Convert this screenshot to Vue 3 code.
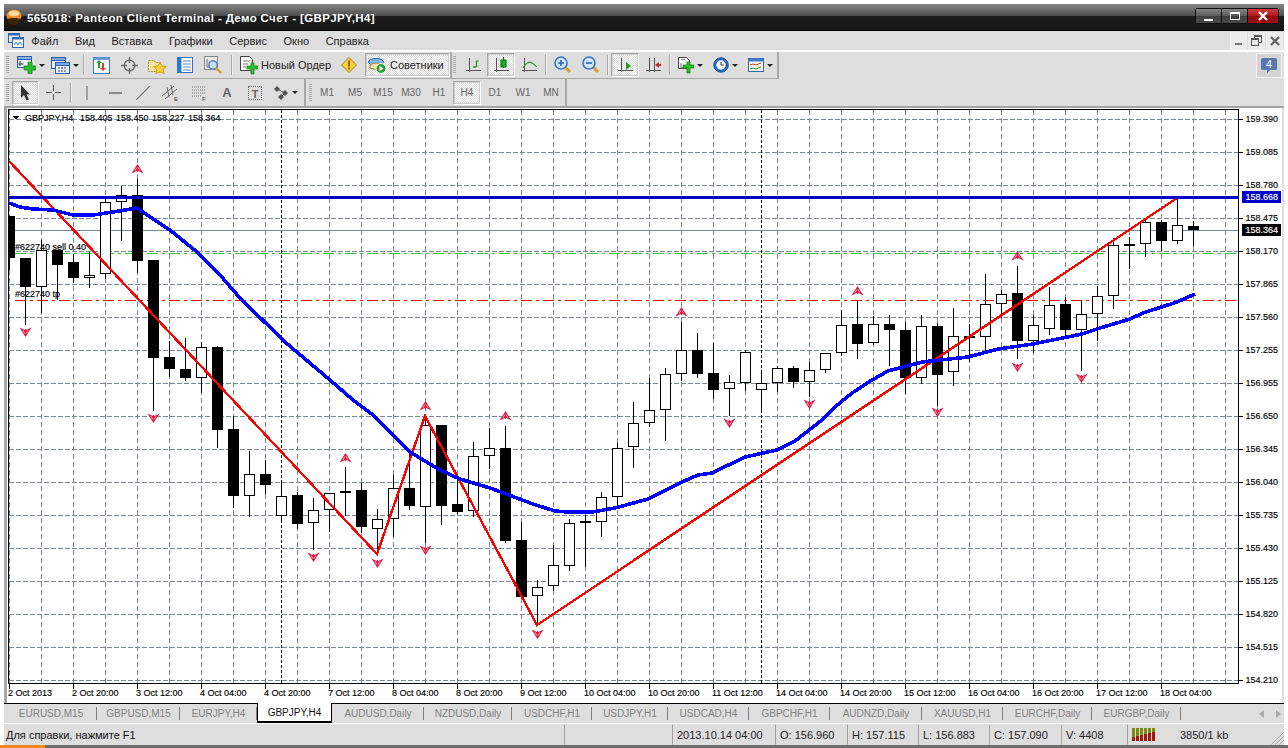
<script setup>
const labels = ['159.390','159.085','158.780','158.475','158.170','157.865','157.560','157.255','156.955','156.650','156.345','156.040','155.735','155.430','155.125','154.820','154.515','154.210']
const hGrid = labels.map((t, i) => ({ t, y: 119 + i * 33 }))
const vGrid = Array.from({ length: 39 }, (_, i) => 9 + i * 32)
const dates = ['2 Oct 2013','2 Oct 20:00','3 Oct 12:00','4 Oct 04:00','4 Oct 20:00','7 Oct 12:00','8 Oct 04:00','8 Oct 20:00','9 Oct 12:00','10 Oct 04:00','10 Oct 20:00','11 Oct 12:00','14 Oct 04:00','14 Oct 20:00','15 Oct 12:00','16 Oct 04:00','16 Oct 20:00','17 Oct 12:00','18 Oct 04:00']
const dateTicks = dates.map((t, i) => ({ t, x: 9 + i * 64 }))
const raw = [
['b',216,258,216,270],['b',258,287,258,325],['w',250,287,240,313],['b',250,265,250,300],['b',262,278,254,283],['w',275,278,252,288],['w',202,274,197,279],['w',195,202,186,241],['b',195,261,179,273],['b',260,358,260,411],
['b',357,369,341,377],['b',369,378,338,381],['w',347,378,342,393],['b',347,430,346,448],['b',429,496,416,508],['w',474,496,451,517],['b',474,485,460,494],['w',496,516,482,520],['b',495,524,492,529],['w',510,523,498,550],
['w',493,510,493,532],['w',491,493,467,516],['b',490,527,483,533],['w',519,529,509,553],['w',488,519,475,537],['b',488,506,450,510],['w',425,507,416,543],['b',425,506,425,525],['b',504,512,480,514],['w',456,511,442,517],
['w',448,456,428,469],['b',448,541,426,543],['b',540,597,522,597],['w',587,596,580,625],['w',565,586,545,591],['w',523,566,519,571],['w',521,523,515,567],['w',497,522,492,537],['w',448,497,443,508],['w',423,447,402,468],
['w',410,423,378,427],['w',374,410,368,441],['w',350,374,322,381],['b',350,374,333,378],['b',373,390,343,399],['w',382,389,375,416],['w',352,383,350,391],['w',383,390,372,413],['w',368,383,366,392],['b',368,382,366,388],
['w',370,382,362,397],['w',353,370,353,373],['w',325,353,310,356],['b',324,344,301,359],['w',324,343,316,345],['b',324,330,315,366],['b',330,378,322,394],['w',326,378,315,384],['b',326,375,323,406],['w',336,372,308,386],
['c',336,337,324,362],['w',304,337,274,351],['w',294,304,290,318],['b',293,341,266,359],['w',325,341,315,353],['w',305,329,287,335],['b',304,330,297,339],['w',314,330,300,371],['w',296,314,286,341],['w',245,296,238,309],
['c',244,245,237,269],['w',222,244,218,257],['b',222,241,220,251],['w',225,241,198,244],['b',226,230,221,246]
]
const candles = raw.map((c, i) => ({ x: 9 + i * 16, k: c[0], top: c[1], bot: c[2], hi: c[3], lo: c[4] }))
const ma = '9,203 20,207 33,209 53,210 73,215 93,215 113,212 137,208 147,215 170,230 197,252 220,275 240,298 285,342 330,380 353,400 373,415 410,452 440,470 460,479 490,488 533,504 555,511 568,512 592,512 615,508 648,499 682,482 698,475 712,473 745,457 777,450 795,441 822,420 835,407 852,393 872,380 888,371 922,362 968,357 998,349 1033,344 1082,334 1100,328 1130,319 1143,313 1177,302 1195,294'
const zig = '9,161 377,554 425,416 537,625 1177,198'
const ups = [[137,169],[345,458],[425,406],[505,416],[681,312],[857,291],[1017,256]]
const downs = [[25,332],[153,418],[313,557],[377,563],[425,550],[537,634],[729,423],[809,404],[937,412],[1017,367],[1081,378]]
const menu = ['Файл','Вид','Вставка','Графики','Сервис','Окно','Справка']
const frames = ['M1','M5','M15','M30','H1','H4','D1','W1','MN']
const tabNames = ['EURUSD,M15','GBPUSD,M15','EURJPY,H4','GBPJPY,H4','AUDUSD,Daily','NZDUSD,Daily','USDCHF,H1','USDJPY,H1','USDCAD,H4','GBPCHF,H1','AUDNZD,Daily','XAUUSD,H1','EURCHF,Daily','EURGBP,Daily']
const edges = [5,97,180,257,332,424,512,592,668,749,830,922,1003,1092,1181]
const tabs = tabNames.map((n, i) => ({ n, w: edges[i + 1] - edges[i], on: i === 3 }))
const cells = [
  { t: '', w: 108 },
  { t: '2013.10.14 04:00', w: 103 },
  { t: 'O: 156.960', w: 72 },
  { t: 'H: 157.115', w: 71 },
  { t: 'L: 156.883', w: 71 },
  { t: 'C: 157.090', w: 72 },
  { t: 'V: 4408', w: 66 }
]
const signal = Array.from({ length: 6 }, (_, i) => i)
</script>

<template>
  <div class="root">
    <div class="win">
      <header class="title">
        <svg class="logo" width="16" height="17" viewBox="0 0 16 17">
          <ellipse cx="8" cy="7" rx="7.5" ry="6.5" fill="#f08a20"/>
          <ellipse cx="8" cy="4.5" rx="5.5" ry="3" fill="#fcd9a0"/>
          <path d="M1 10 Q8 8 15 10 Q14 16 8 16 Q2 16 1 10Z" fill="#3a2208"/>
        </svg>
        <span class="title-text">565018: Panteon Client Terminal - Демо Счет - [GBPJPY,H4]</span>
        <div class="wbtns">
          <div class="wb"><i class="wb-min"></i></div>
          <div class="wb"><i class="wb-max"></i></div>
          <div class="wb wb-close">
            <svg width="12" height="10" viewBox="0 0 12 10"><path d="M2 1 L10 9 M10 1 L2 9" stroke="#fff" stroke-width="2.4"/></svg>
          </div>
        </div>
      </header>

      <nav class="menubar">
        <svg class="app-ic" width="16" height="15" viewBox="0 0 16 15">
          <rect x="0.5" y="0.5" width="11" height="9" fill="#dfe9f8" stroke="#3566b0"/>
          <rect x="0.5" y="0.5" width="11" height="2" fill="#3566b0"/>
          <rect x="4.5" y="4.5" width="11" height="10" fill="#fff" stroke="#3566b0"/>
          <rect x="4.5" y="4.5" width="11" height="2" fill="#3566b0"/>
          <path d="M6 12 L8 9 L10 12 L12 9 L14 12" stroke="#2a7ac0" fill="none"/>
        </svg>
        <span v-for="m in menu" :key="m" class="mi">{{ m }}</span>
        <div class="mdi">
          <div class="mb"><i class="mb-min"></i></div>
          <div class="mb"><svg width="11" height="11" viewBox="0 0 11 11" fill="none" stroke="#555"><rect x="3.5" y="0.5" width="7" height="7"/><path d="M3.5 1.5h7"/><rect x="0.5" y="3.5" width="7" height="7" fill="#e8e8e8"/><path d="M0.5 4.5h7"/></svg></div>
          <div class="mb"><svg width="10" height="10" viewBox="0 0 10 10"><path d="M1 1 L9 9 M9 1 L1 9" stroke="#666" stroke-width="2.4"/></svg></div>
        </div>
      </nav>

      <div class="row row1">
        <div class="bar bar1">
          <span class="grip"></span>
          <div class="b w31">
            <svg width="19" height="18" viewBox="0 0 19 18"><rect x=".5" y=".5" width="14" height="11" fill="#eef4fc" stroke="#2a5fa8"/><rect x=".5" y=".5" width="14" height="3" fill="#8ab0e4" stroke="#2a5fa8"/><path d="M3 5v5M1.500 8h5" stroke="#333"/><path d="M7 10h4V6h4v4h4v4h-4v4h-4v-4H7z" fill="#2cc02c" stroke="#0c7a0c" stroke-width=".7"/></svg>
            <i class="dd"></i>
          </div>
          <div class="b w32">
            <svg width="19" height="17" viewBox="0 0 19 17"><rect x=".5" y=".5" width="14" height="11" fill="#e6eefa" stroke="#2a5fa8"/><rect x=".5" y=".5" width="14" height="3" fill="#7fa8e0" stroke="#2a5fa8"/><rect x="4.5" y="5.5" width="14" height="11" fill="#e6eefa" stroke="#2a5fa8"/><rect x="4.5" y="5.5" width="14" height="3" fill="#7fa8e0" stroke="#2a5fa8"/><path d="M7 11h9M7 14h9" stroke="#444" stroke-dasharray="2 1"/></svg>
            <i class="dd"></i>
          </div>
          <i class="sep sep-first"></i>
          <div class="b">
            <svg width="17" height="17" viewBox="0 0 17 17"><rect x=".5" y=".5" width="16" height="16" fill="#f4f8ff" stroke="#4178bc"/><rect x=".5" y=".5" width="16" height="2.5" fill="#6f9ddc"/><path d="M5 11V6H3l3-3 3 3H7v5z" fill="#2ba02b"/><path d="M11 6v5h2l-3 3-3-3h2V6z" fill="#d8402a"/></svg>
          </div>
          <div class="b">
            <svg width="17" height="17" viewBox="0 0 17 17" fill="none" stroke="#666" stroke-width="1.3"><circle cx="8.5" cy="8.5" r="5.3"/><path d="M8.5 0v6M8.5 11v6M0 8.5h6M11 8.5h6"/></svg>
          </div>
          <div class="b">
            <svg width="19" height="17" viewBox="0 0 19 17"><path d="M.5 3.5h6l1 2h5v9h-12z" fill="#f8e4a0" stroke="#a88a30" stroke-dasharray="2 1"/><path d="M12 5l2 4 4.4.5-3.2 3 .9 4.4-4.1-2.2-4 2.2.8-4.4-3.2-3L10 9z" fill="#fcd23a" stroke="#c09010" stroke-width=".8"/></svg>
          </div>
          <div class="b">
            <svg width="16" height="16" viewBox="0 0 16 16"><rect x=".5" y=".5" width="15" height="15" fill="#fff" stroke="#3170c0"/><rect x=".5" y=".5" width="4" height="15" fill="#2f7ad0"/><path d="M6 4h8M6 7h8M6 10h8M6 13h8" stroke="#5a8ac8"/></svg>
          </div>
          <div class="b">
            <svg width="18" height="18" viewBox="0 0 18 18"><rect x=".5" y=".5" width="13" height="13" fill="#e8e8e8" stroke="#888"/><path d="M3 3v8h8" stroke="#777" fill="none"/><circle cx="9" cy="9" r="4.2" fill="#c8dcf4" stroke="#4a7ab8" stroke-width="1.3"/><path d="M12 12l5 5" stroke="#d4a030" stroke-width="2.4"/></svg>
          </div>
          <i class="sep sep-order"></i>
          <div class="b order">
            <svg width="18" height="19" viewBox="0 0 18 19"><path d="M.5 .5h9l3 3v11h-12z" fill="#fff" stroke="#444"/><path d="M3 5h7M3 8h5M3 11h3" stroke="#777"/><path d="M7 10h4V7h3v3h4v3h-4v5h-3v-5H7z" fill="#2cc02c" stroke="#0c7a0c" stroke-width=".7"/></svg>
            <span class="b-text">Новый Ордер</span>
          </div>
          <div class="b">
            <svg width="16" height="16" viewBox="0 0 16 16"><path d="M8 .5 15.5 8 8 15.5 .5 8z" fill="#fcd23a" stroke="#a87a10"/><rect x="7" y="3.5" width="2" height="6" fill="#a06010"/><rect x="7" y="10.5" width="2" height="2" fill="#a06010"/></svg>
          </div>
          <div class="b adv pressed">
            <svg width="19" height="17" viewBox="0 0 19 17"><ellipse cx="8" cy="5" rx="7.5" ry="3.5" fill="#7fb8e8" stroke="#2a6aa8"/><path d="M2 8q6-4 12 0v3q-6 3-12 0z" fill="#fce0a8" stroke="#b08840"/><circle cx="13" cy="11.5" r="5" fill="#2ca02c" stroke="#fff"/><path d="M11.5 9l4 2.5-4 2.5z" fill="#fff"/></svg>
            <span class="b-text">Советники</span>
          </div>
        </div>
        <div class="bar bar2">
          <span class="grip"></span>
          <div class="b"><svg width="15" height="15" viewBox="0 0 15 15" fill="none"><path d="M3.5 0v14M0 12.5h15" stroke="#555"/><path d="M8 10V8M8.5 9h2M10.5 9V3h2" stroke="#0a8a0a" stroke-width="1.2"/></svg></div>
          <div class="b pressed"><svg width="15" height="16" viewBox="0 0 15 16" fill="none"><path d="M2.5 1v14M0 13.5h15" stroke="#555"/><path d="M9.5 0v11" stroke="#0a6a0a"/><rect x="7" y="3" width="5" height="7" fill="#18b018" stroke="#0a6a0a"/></svg></div>
          <div class="b"><svg width="15" height="15" viewBox="0 0 15 15" fill="none"><path d="M2.5 0v14M0 12.5h15" stroke="#555"/><path d="M1 10Q6 2 10 5 12 6 15 9" stroke="#2a9a2a" stroke-width="1.2"/></svg></div>
          <i class="sep sep-a"></i>
          <div class="b"><svg width="17" height="18" viewBox="0 0 17 18"><path d="M10 10l6 6" stroke="#d8a030" stroke-width="3"/><circle cx="7" cy="7" r="6" fill="#d0e4fa" stroke="#3a78c0" stroke-width="1.6"/><path d="M4 7h6M7 4v6" stroke="#2a68b0" stroke-width="1.6"/></svg></div>
          <div class="b"><svg width="17" height="18" viewBox="0 0 17 18"><path d="M10 10l6 6" stroke="#d8a030" stroke-width="3"/><circle cx="7" cy="7" r="6" fill="#d0e4fa" stroke="#3a78c0" stroke-width="1.6"/><path d="M4 7h6" stroke="#2a68b0" stroke-width="1.6"/></svg></div>
          <i class="sep sep-b"></i>
          <div class="b pressed"><svg width="15" height="15" viewBox="0 0 15 15" fill="none"><path d="M3.5 0v14M0 12.5h15" stroke="#555"/><path d="M8 4l5 4-5 4z" fill="#18a018"/></svg></div>
          <div class="b"><svg width="15" height="15" viewBox="0 0 15 15" fill="none"><path d="M3.5 0v14M0 12.5h15M8.5 0v14" stroke="#555"/><path d="M9 7l4-3v2h2v2h-2v2z" fill="#c03020"/></svg></div>
          <i class="sep sep-c"></i>
          <div class="b w35">
            <svg width="16" height="18" viewBox="0 0 16 18"><path d="M.5 1.5h8l3 3v8h-11z" fill="#fff" stroke="#444"/><path d="M3 3.5h4" stroke="#888"/><path d="M3 7v5h5" stroke="#666" fill="none"/><path d="M5 9h4V6h3v3h4v3h-4v5H9v-5H5z" fill="#2cc02c" stroke="#0c7a0c" stroke-width=".7"/></svg>
            <i class="dd"></i>
          </div>
          <div class="b w35">
            <svg width="16" height="16" viewBox="0 0 16 16"><circle cx="8" cy="8" r="7.2" fill="#1f6ec0" stroke="#0f4a90"/><circle cx="8" cy="8" r="4.7" fill="#f8f8f8"/><path d="M8 5v3h2.5" stroke="#333" fill="none"/></svg>
            <i class="dd"></i>
          </div>
          <div class="b w35">
            <svg width="16" height="14" viewBox="0 0 16 14"><rect x=".5" y=".5" width="15" height="13" fill="#f8f8f0" stroke="#3568a8"/><rect x=".5" y=".5" width="15" height="3" fill="#3f7ac8"/><path d="M2 7l3-1 3 1 5-2" stroke="#c04020" fill="none"/><path d="M2 11l3-1 3 1 5-2" stroke="#2a9a2a" fill="none"/></svg>
            <i class="dd"></i>
          </div>
        </div>
        <div class="notify">
          <svg width="16" height="16" viewBox="0 0 16 16"><path d="M1.5 0h13A1.5 1.5 0 0 1 16 1.5v9a1.5 1.5 0 0 1-1.5 1.5H9l-3 3.5V12H1.5A1.5 1.5 0 0 1 0 10.5v-9A1.5 1.5 0 0 1 1.500 0z" fill="#5a78b0"/><text x="8" y="9.500" text-anchor="middle" class="nt">4</text></svg>
        </div>
      </div>

      <div class="row row2">
        <div class="bar bar3">
          <span class="grip"></span>
          <div class="b pressed w27"><svg width="11" height="16" viewBox="0 0 11 16"><path d="M1 0v13l3-3 2.500 5.500 2.500-1-2.500-5H10z" fill="#333"/></svg></div>
          <div class="b w27 crossb"><svg width="15" height="15" viewBox="0 0 15 15"><path d="M7.500 0v6M7.500 9v6M0 7.500h6M9 7.500h6" stroke="#555"/></svg></div>
          <i class="sep s3"></i>
          <div class="b"><svg width="2" height="14" viewBox="0 0 2 14"><path d="M1 0v14" stroke="#666"/></svg></div>
          <div class="b"><svg width="13" height="2" viewBox="0 0 13 2"><path d="M0 1h13" stroke="#666" stroke-width="1.4"/></svg></div>
          <div class="b"><svg width="14" height="14" viewBox="0 0 14 14"><path d="M0 14L14 0" stroke="#777" stroke-width="1.2"/></svg></div>
          <div class="b"><svg width="18" height="16" viewBox="0 0 18 16"><path d="M0 11L12 1M3 14L15 4M5 2l2 10M9 0l2 10" stroke="#666" fill="none"/><text x="12" y="16" class="it">E</text></svg></div>
          <div class="b"><svg width="16" height="16" viewBox="0 0 16 16"><path d="M1 2h14M1 5h14M1 8h14M1 11h9" stroke="#777" stroke-dasharray="1 1"/><text x="11" y="16" class="it">F</text></svg></div>
          <div class="b"><span class="big-a">A</span></div>
          <div class="b"><span class="big-t">T</span></div>
          <div class="b w32b">
            <svg width="15" height="14" viewBox="0 0 15 14"><path d="M0 3l3-3 3 3-3 3zM8 7l3-3 3 3-3 3zM4 11l3-3 3 3-3 3z" fill="#555"/><path d="M3 3l8 4M7 11l4-4" stroke="#555"/></svg>
            <i class="dd"></i>
          </div>
        </div>
        <div class="bar bar4">
          <span class="grip"></span>
          <div v-for="f in frames" :key="f" class="b tf" :class="{ pressed: f === 'H4' }">{{ f }}</div>
        </div>
      </div>

      <main class="main">
        <i class="edge-l"></i>
        <svg class="chart" width="1274" height="595" viewBox="8 108 1274 595">
          <rect x="8" y="108" width="1274" height="595" fill="#fff"/>
          <g shape-rendering="crispEdges">
            <line v-for="g in hGrid" :key="g.t" x1="9" :y1="g.y + .5" x2="1238" :y2="g.y + .5" stroke="#778899" stroke-dasharray="5 2"/>
            <line v-for="x in vGrid" :key="x" :x1="x + .5" y1="110" :x2="x + .5" y2="683" stroke="#778899" stroke-dasharray="5 3"/>
            <line x1="281.5" y1="110" x2="281.5" y2="683" stroke="#000" stroke-dasharray="3 2"/>
            <line x1="761.5" y1="110" x2="761.5" y2="683" stroke="#000" stroke-dasharray="3 2"/>
            <line x1="9" y1="230.5" x2="1238" y2="230.5" stroke="#778899"/>
            <line x1="15" y1="253.5" x2="1238" y2="253.5" stroke="#32c832" stroke-dasharray="11 4 3 4"/>
            <line x1="15" y1="300.5" x2="1238" y2="300.5" stroke="#ff0000" stroke-dasharray="11 4 3 4"/>
            <g v-for="c in candles" :key="c.x">
              <line :x1="c.x + .5" :y1="c.hi" :x2="c.x + .5" :y2="c.lo" stroke="#000"/>
              <rect v-if="c.k === 'b'" :x="c.x - 5" :y="c.top" width="11" :height="c.bot - c.top" fill="#000"/>
              <rect v-else-if="c.k === 'w'" :x="c.x - 4.5" :y="c.top + .5" width="10" :height="c.bot - c.top - 1" fill="#fff" stroke="#000"/>
              <line v-else :x1="c.x - 5" :y1="c.top + .5" :x2="c.x + 6" :y2="c.top + .5" stroke="#000" stroke-width="2"/>
            </g>
            <polyline :points="zig" fill="none" stroke="#ff0000" stroke-width="2.4"/>
            <line x1="9" y1="197" x2="1238" y2="197" stroke="#0000c8" stroke-width="3"/>
            <polyline :points="ma" fill="none" stroke="#0000ff" stroke-width="3.6"/>
            <rect x="8.5" y="109.5" width="1230" height="574" fill="none" stroke="#000"/>
            <line v-for="g in hGrid" :key="'t' + g.t" x1="1239" :y1="g.y + .5" x2="1243" :y2="g.y + .5" stroke="#000"/>
            <line v-for="d in dateTicks" :key="'d' + d.t" :x1="d.x + .5" y1="684" :x2="d.x + .5" y2="689" stroke="#000"/>
            <rect x="1242" y="191" width="39" height="12" fill="#0000c8"/>
            <rect x="1242" y="224" width="39" height="12" fill="#000"/>
          </g>
          <g>
            <g v-for="(p, i) in ups" :key="'u' + i" :transform="`translate(${p[0] + .5} ${p[1]})`">
              <path d="M0-5 6 4.500 .8 2 0 3.500 -.8 2 -6 4.500Z" fill="#dc143c"/>
              <path d="M-2.500 1.800-.7-1.500M2.500 1.800.7-1.500" stroke="#fff" stroke-width=".8" opacity=".85"/>
            </g>
            <g v-for="(p, i) in downs" :key="'v' + i" :transform="`translate(${p[0] + .5} ${p[1]})`">
              <path d="M0 5 6-4.500 .8-2 0-3.500 -.8-2 -6-4.500Z" fill="#dc143c"/>
              <path d="M-2.500-1.800-.7 1.500M2.500-1.800.7 1.500" stroke="#fff" stroke-width=".8" opacity=".85"/>
            </g>
          </g>
          <g class="ct">
            <path d="M12 116h7l-3.500 3.500z" fill="#000" shape-rendering="crispEdges"/>
            <text x="25" y="121">GBPJPY,H4</text>
            <text x="80" y="121">158.405</text>
            <text x="116" y="121">158.450</text>
            <text x="152" y="121">158.227</text>
            <text x="188" y="121">158.364</text>
            <text x="15" y="250">#622740 sell 0.40</text>
            <text x="15" y="297">#622740 tp</text>
            <text v-for="g in hGrid" :key="'l' + g.t" x="1245.500" :y="g.y + 3">{{ g.t }}</text>
            <text v-for="d in dateTicks" :key="'x' + d.t" :x="d.x - 1" y="696">{{ d.t }}</text>
          </g>
          <g class="ct ct-white">
            <text x="1245.500" y="200">158.668</text>
            <text x="1245.500" y="233">158.364</text>
          </g>
        </svg>
        <i class="edge-r"></i>
      </main>

      <div class="tabs">
        <div v-for="t in tabs" :key="t.n" class="tab" :class="{ on: t.on }" :style="{ width: t.w + 'px' }">{{ t.n }}</div>
        <div class="tab-arrows">
          <svg width="5" height="8" viewBox="0 0 5 8"><path d="M5 0v8L0 4z" fill="#aaa"/></svg>
          <svg width="5" height="8" viewBox="0 0 5 8"><path d="M0 0v8l5-4z" fill="#aaa"/></svg>
        </div>
      </div>

      <footer class="status">
        <span class="help">Для справки, нажмите F1</span>
        <div v-for="c in cells" :key="c.w + c.t" class="cell" :style="{ width: c.w + 'px' }">{{ c.t }}</div>
        <div class="cell net">
          <svg width="24" height="13" viewBox="0 0 24 13" shape-rendering="crispEdges">
            <g v-for="i in signal" :key="i">
              <rect :x="i * 4" y="0" width="3" height="12" fill="#7a8a14"/>
              <rect :x="i * 4" :y="9 - i" width="3" :height="4 + i" fill="#a01a10"/>
            </g>
          </svg>
          <span class="kb">3850/1 kb</span>
        </div>
        <svg class="gripper" width="14" height="14" viewBox="0 0 14 14"><path d="M14 1L1 14M14 5L5 14M14 9L9 14" stroke="#aaa"/></svg>
      </footer>
    </div>
    <div class="taskbar"><i class="start"></i></div>
  </div>
</template>

<style scoped>
.root { width: 1288px; height: 748px; background: #fff; display: flex; flex-direction: column; padding-top: 4px; box-sizing: border-box; overflow: hidden; font-family: "Liberation Sans", Arial, sans-serif; }
.win { flex: 1; margin: 0 4px; display: flex; flex-direction: column; min-height: 0; background: #dedede; }
i { display: block; }

.title { height: 27px; flex: none; display: flex; align-items: center; padding: 0 5px 0 2px; background: linear-gradient(#868686 0, #4e4e4e 12px, #1d1d1d 12px, #151515 26px, #000 26px); box-sizing: border-box; }
.logo { margin-right: 5px; }
.title-text { color: #fff; font-weight: 700; font-size: 11.500px; letter-spacing: .36px; white-space: nowrap; }
.wbtns { margin-left: auto; display: flex; gap: 1px; padding: 1px; background: #111; border-radius: 3px; margin-top: -3px; }
.wb { width: 25px; height: 14px; background: linear-gradient(#858585, #5a5a5a 50%, #3e3e3e 50%, #4a4a4a); display: flex; align-items: center; justify-content: center; }
.wb-close { width: 30px; background: linear-gradient(#c84040, #b01818 50%, #8c0c0c 50%, #a01010); }
.wb-min { width: 9px; height: 2px; background: #fff; margin-top: 7px; }
.wb-max { width: 10px; height: 8px; border: 1px solid #fff; border-top-width: 2px; box-sizing: border-box; }

.menubar { height: 19px; flex: none; display: flex; align-items: center; padding-left: 4px; border-bottom: 2px solid #fff; font-size: 11px; color: #222; }
.app-ic { margin-right: -1px; }
.mi { padding: 0 8.300px; }
.mdi { margin-left: auto; margin-right: 1px; display: flex; gap: 1px; }
.mb { width: 17px; height: 18px; background: #ececec; display: flex; align-items: center; justify-content: center; }
.mb-min { width: 7px; height: 2px; background: #777; margin-top: 6px; }

.row { display: flex; flex: none; }
.row1 { height: 27px; }
.row2 { height: 27px; border-bottom: 2px solid #a2a2a2; }
.bar { display: flex; align-items: center; height: 100%; box-sizing: border-box; border-right: 2px solid #a8a8a8; position: relative; }
.bar1, .bar2 { border-bottom: 1px solid #a8a8a8; }
.bar1 { width: 448px; }
.bar2 { width: 327px; }
.bar3 { width: 302px; }
.bar4 { width: 261px; }
.grip { width: 3px; height: 18px; margin: 0 1px 0 2px; flex: none; background: repeating-linear-gradient(#aaa 0 1px, transparent 1px 2px); }
.bar2 .grip { margin: 0 3px 0 1px; }
.bar3 .grip { margin: 0 3px 0 2px; }
.bar4 .grip { margin: 0 1px 0 3px; }

.b { width: 28px; height: 24px; flex: none; display: flex; align-items: center; justify-content: center; box-sizing: border-box; font-size: 11px; color: #222; }
.w31 { width: 33px; margin-left: 4px; }
.w32 { width: 35px; }
.w35 { width: 35px; padding-left: 3px; }
.w27 { width: 27px; }
.w32b { width: 33px; }
.crossb { margin-left: 1px; }
.dd { width: 0; height: 0; border: 3px solid transparent; border-top: 3px solid #222; border-bottom: 0; margin-left: 3px; }
.sep { width: 1px; height: 20px; background: #a8a8a8; margin: 0 1px; flex: none; border-right: 1px solid #f0f0f0; }
.sep-first { margin: 0 2px 0 1px; }
.sep-order { margin: 0 1px 0 4px; }
.sep-a { margin: 0 1px 0 2px; }
.sep-b { margin: 0 2px 0 3px; }
.sep-c { margin: 0 0 0 2px; }
.s3 { margin: 0 1px 0 3px; }
.order { width: 101px; justify-content: flex-start; padding-left: 6px; gap: 3px; }
.adv { width: 85px; justify-content: flex-start; padding-left: 2px; gap: 3px; margin-left: 2px; }
.b-text { white-space: nowrap; }
.pressed { border: 1px solid; border-color: #a8a8a8 #fff #fff #a8a8a8; outline: 1px solid #cfcfcf; outline-offset: -2px; background: repeating-conic-gradient(#fbfbfb 0 25%, #dedede 0 50%) 0 0 / 2px 2px; }
.tf { font-size: 10px; color: #666; }
.big-a { font-weight: 700; color: #666; font-size: 13px; }
.big-t { display: block; width: 14px; height: 14px; line-height: 14px; border: 1px dotted #666; text-align: center; font-weight: 700; color: #666; font-size: 11px; box-sizing: border-box; }
.it { font-size: 6px; fill: #333; font-family: "Liberation Sans", sans-serif; }
.nt { font-size: 11px; fill: #fff; font-family: "Liberation Sans", sans-serif; }

.notify { margin-left: auto; width: 26px; height: 25px; margin-top: 1px; margin-right: 2px; border: 1px solid #f4f4f4; box-sizing: border-box; background: #d4d4d4; display: flex; align-items: center; justify-content: center; }

.main { height: 595px; flex: none; display: flex; background: #fff; }
.edge-l { width: 4px; flex: none; background: linear-gradient(90deg, #a8a8a8 0 3px, #fff 3px); }
.edge-r { width: 2px; flex: none; background: #dedede; }
.chart { display: block; flex: none; }
.ct text { font-size: 9px; fill: #000; stroke: #000; stroke-width: .15px; font-family: "Liberation Sans", sans-serif; white-space: pre; }
.ct-white text { fill: #fff; stroke: #fff; }

.tabs { height: 19px; flex: none; display: flex; border-top: 1px solid #000; border-bottom: 1px solid #fff; position: relative; padding-left: 1px; }
.tab { height: 19px; box-sizing: border-box; display: flex; align-items: center; justify-content: center; font-size: 10px; color: #808080; flex: none; background: linear-gradient(#808080, #808080) right 3px / 1px 13px no-repeat; }
.tab.on { background: #fff; color: #111; border: 1px solid #000; border-top: 0; border-bottom-width: 2px; height: 20px; margin-top: -1px; }
.tab-arrows { margin-left: auto; display: flex; align-items: center; gap: 12px; padding-right: 3px; }

.status { height: 21px; flex: none; display: flex; align-items: center; font-size: 11px; color: #222; position: relative; padding-left: 1px; }
.help { width: 559px; flex: none; color: #111; padding-left: 1px; box-sizing: border-box; white-space: nowrap; }
.cell { height: 20px; flex: none; display: flex; align-items: center; box-sizing: border-box; padding-left: 4px; border-left: 1px solid #a0a0a0; white-space: nowrap; }
.net { padding-left: 4px; width: 110px; }
.kb { margin-left: 24px; }
.gripper { position: absolute; right: 0; bottom: 0; }

.taskbar { height: 3px; flex: none; background: #6e6e6e; }
.start { width: 45px; height: 3px; background: #f08820; }
</style>
